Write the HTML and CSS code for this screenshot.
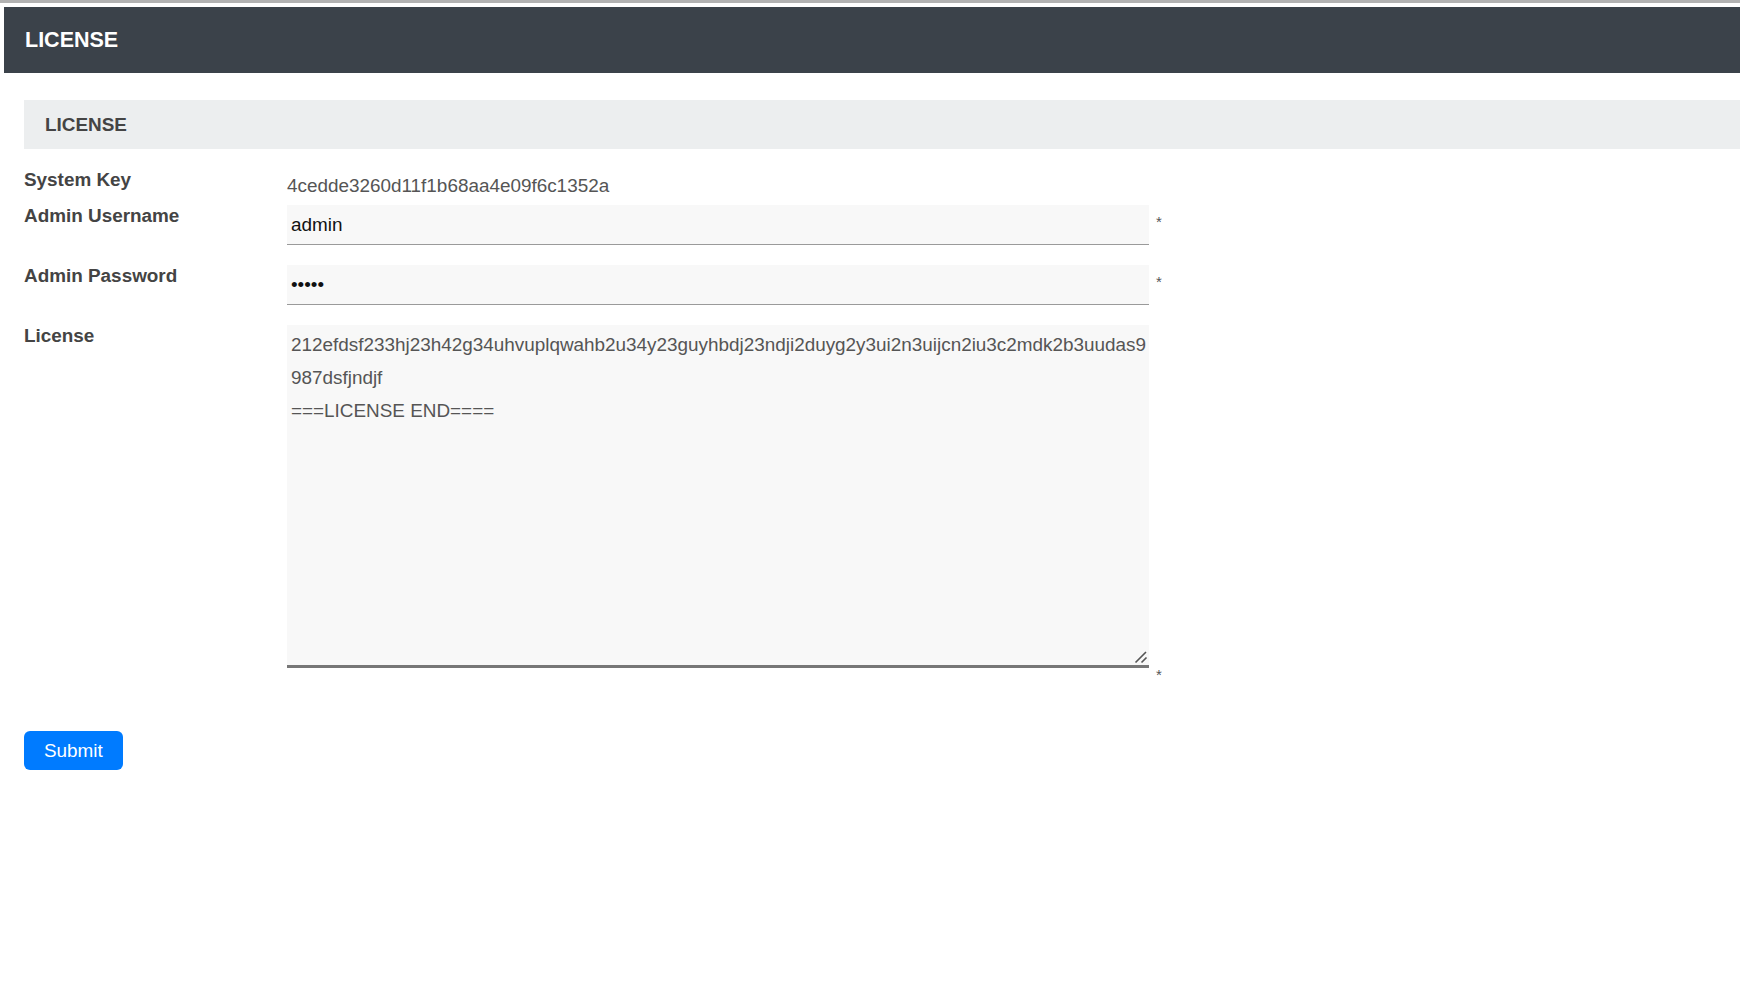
FILE: index.html
```html
<!DOCTYPE html>
<html lang="en">
<head>
<meta charset="utf-8">
<title>License</title>
<link rel="stylesheet" href="styles.css">
</head>
<body>
<div class="topstrip"></div>
<header class="appbar"><h1 class="appbar-title">LICENSE</h1></header>
<main class="content">
  <div class="section-bar"><h2 class="section-title">LICENSE</h2></div>
  <form class="form">
    <div class="row row-key">
      <label class="label">System Key</label>
      <div class="value">4cedde3260d11f1b68aa4e09f6c1352a</div>
    </div>
    <div class="row">
      <label class="label" for="user">Admin Username</label>
      <div class="field"><input id="user" class="input" type="text" value="admin"><span class="req">*</span></div>
    </div>
    <div class="row">
      <label class="label" for="pass">Admin Password</label>
      <div class="field"><input id="pass" class="input" type="password" value="admin"><span class="req">*</span></div>
    </div>
    <div class="row">
      <label class="label" for="lic">License</label>
      <div class="field field-ta"><div class="ta-wrap"><textarea id="lic" class="textarea">212efdsf233hj23h42g34uhvuplqwahb2u34y23guyhbdj23ndji2duyg2y3ui2n3uijcn2iu3c2mdk2b3uudas9987dsfjndjf
===LICENSE END====</textarea><svg class="grip" width="14" height="14" viewBox="0 0 14 14"><path d="M1.5 12.5 L12 2 M7.5 12.5 L12.5 7.5" stroke="#555" stroke-width="1.6" fill="none"/></svg></div><span class="req req-low">*</span></div>
    </div>
    <div class="actions">
      <button type="button" class="btn">Submit</button>
    </div>
  </form>
</main>
</body>
</html>
```
FILE: styles.css
```css
html, body {
  margin: 0;
  padding: 0;
  background: #ffffff;
  font-family: "Liberation Sans", Arial, sans-serif;
}

.topstrip {
  height: 3px;
  background: #b2b2b2;
}

.appbar {
  margin: 4px 0 0 4px;
  height: 66px;
  background: #3b424a;
  display: flex;
  align-items: center;
  padding-left: 21px;
}

.appbar-title {
  margin: 0;
  color: #ffffff;
  font-size: 21.5px;
  font-weight: bold;
}

.content {
  padding: 27px 0 0 24px;
}

.section-bar {
  height: 49px;
  background: #eceeef;
  display: flex;
  align-items: center;
  padding-left: 21px;
}

.section-title {
  margin: 0;
  font-size: 18.9px;
  font-weight: bold;
  color: #444444;
}

.form {
  padding-top: 20px;
}

.row {
  display: flex;
  align-items: flex-start;
}

.row + .row {
  margin-top: 20px;
}

.row-key + .row {
  margin-top: 8px;
}

.label {
  width: 263px;
  flex: none;
  font-size: 18.9px;
  line-height: 22px;
  font-weight: bold;
  color: #444444;
}

.value {
  margin-top: 6px;
  font-size: 18.9px;
  line-height: 22px;
  color: #555555;
}

.field {
  font-size: 15px;
  line-height: 1;
}

.field-ta {
  display: flex;
  align-items: flex-end;
}

.input {
  box-sizing: border-box;
  width: 862px;
  height: 40px;
  margin: 0;
  padding: 0 4px;
  border: none;
  border-bottom: 1px solid #9a9a9a;
  background: #f8f8f8;
  font-family: "Liberation Sans", Arial, sans-serif;
  font-size: 18.9px;
  color: #111111;
  outline: none;
}

.ta-wrap {
  position: relative;
}

.textarea {
  display: block;
  box-sizing: border-box;
  width: 862px;
  height: 343px;
  margin: 0;
  padding: 3px 0 3px 4px;
  border: none;
  border-bottom: 3px solid #777777;
  background: #f8f8f8;
  font-family: "Liberation Sans", Arial, sans-serif;
  font-size: 18.9px;
  line-height: 33px;
  color: #555555;
  outline: none;
  resize: none;
}

.grip {
  position: absolute;
  right: 1px;
  bottom: 4px;
}

.req {
  margin-left: 7px;
  color: #555555;
  font-size: 15px;
  vertical-align: 4px;
}

.req-low {
  transform: translateY(14px);
}

.actions {
  padding-top: 63px;
}

.btn {
  height: 39px;
  padding: 0 20px;
  border: none;
  border-radius: 6px;
  background: #007bff;
  color: #ffffff;
  font-family: "Liberation Sans", Arial, sans-serif;
  font-size: 18.9px;
}
```
